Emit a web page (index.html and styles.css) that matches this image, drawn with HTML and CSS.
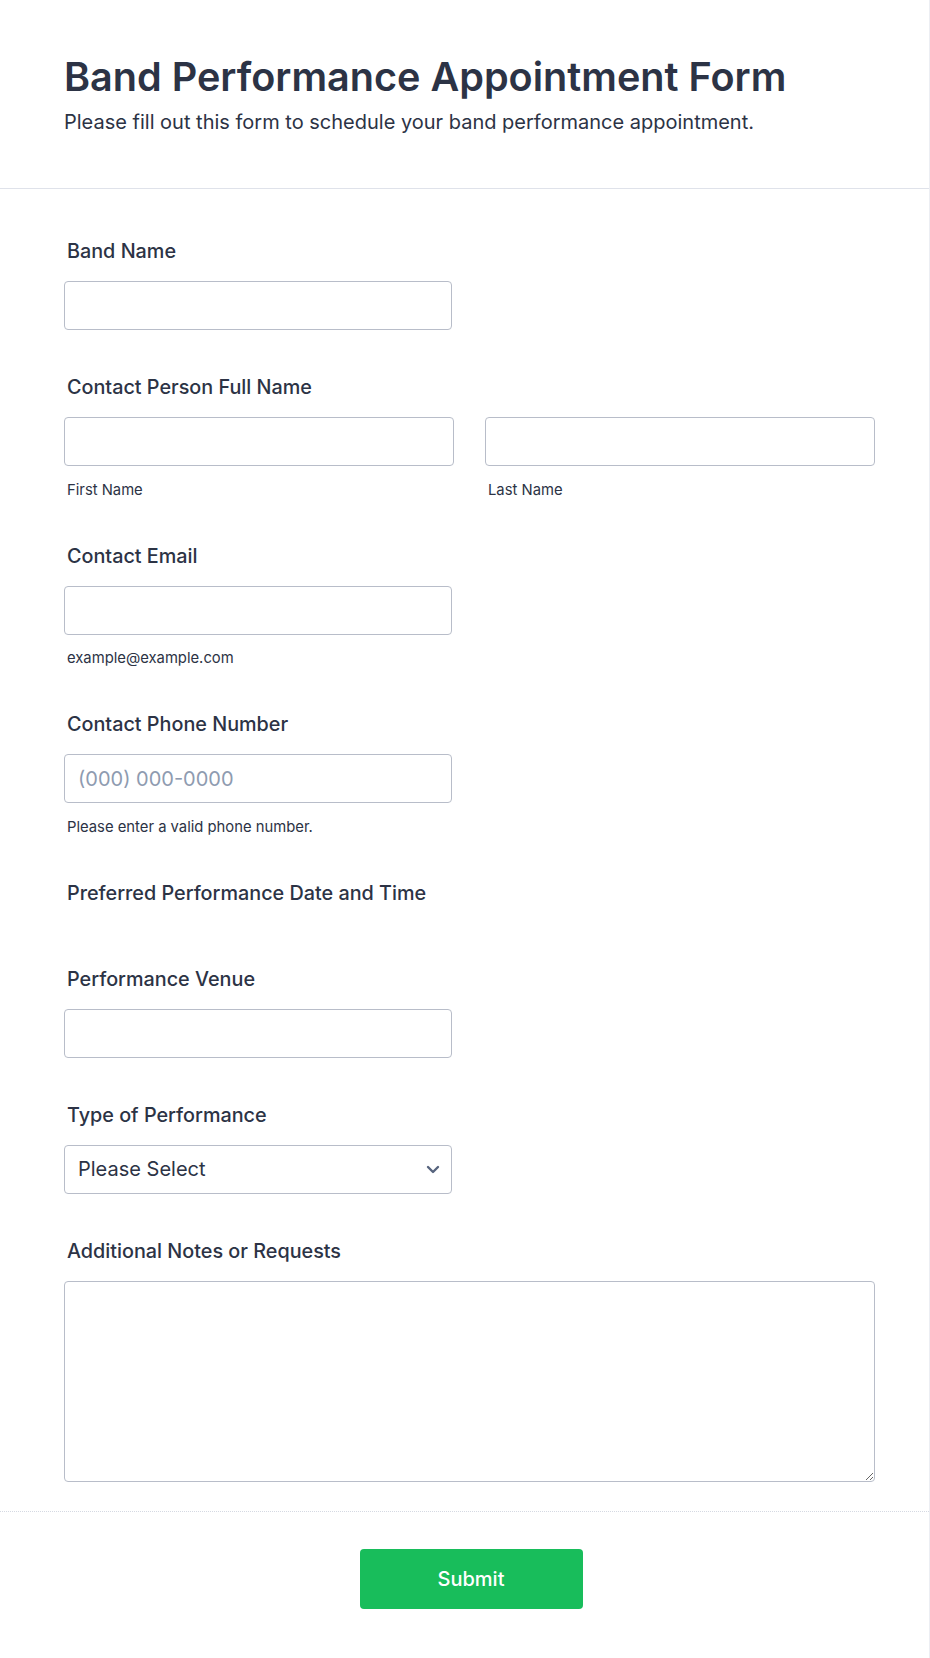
FILE: index.html
```html
<!DOCTYPE html>
<html lang="en">
<head>
<meta charset="utf-8">
<title>Band Performance Appointment Form</title>
<link rel="stylesheet" href="styles.css">
</head>
<body>
<div class="page">
  <header class="form-header">
    <h1 class="title">Band Performance Appointment Form</h1>
    <p class="subtitle">Please fill out this form to schedule your band performance appointment.</p>
  </header>

  <form class="form-body">
    <div class="field">
      <label class="label">Band Name</label>
      <input class="input short" type="text">
    </div>

    <div class="field">
      <label class="label">Contact Person Full Name</label>
      <div class="two-col">
        <div class="col">
          <input class="input" type="text">
          <span class="sublabel">First Name</span>
        </div>
        <div class="col">
          <input class="input" type="text">
          <span class="sublabel">Last Name</span>
        </div>
      </div>
    </div>

    <div class="field">
      <label class="label">Contact Email</label>
      <input class="input short" type="email">
      <span class="sublabel">example@example.com</span>
    </div>

    <div class="field">
      <label class="label">Contact Phone Number</label>
      <input class="input short" type="tel" placeholder="(000) 000-0000">
      <span class="sublabel">Please enter a valid phone number.</span>
    </div>

    <div class="field">
      <label class="label">Preferred Performance Date and Time</label>
      <div class="spacer"></div>
    </div>

    <div class="field">
      <label class="label">Performance Venue</label>
      <input class="input short" type="text">
    </div>

    <div class="field">
      <label class="label">Type of Performance</label>
      <div class="select-wrap short">
        <select class="select">
          <option>Please Select</option>
        </select>
        <svg class="chevron" width="14" height="9" viewBox="0 0 14 9" aria-hidden="true">
          <path d="M2 2 L7 7 L12 2" fill="none" stroke="#57647e" stroke-width="2.4" stroke-linecap="round" stroke-linejoin="round"/>
        </svg>
      </div>
    </div>

    <div class="field last">
      <label class="label">Additional Notes or Requests</label>
      <textarea class="textarea"></textarea>
    </div>
  </form>

  <div class="footer">
    <button class="submit" type="button">Submit</button>
  </div>
</div>
</body>
</html>
```

FILE: styles.css
```css
* {
  box-sizing: border-box;
}

html, body {
  margin: 0;
  padding: 0;
  background: #ffffff;
}

body {
  font-family: "Inter", "Liberation Sans", sans-serif;
  color: #2c3345;
}

.page {
  width: 930px;
  min-height: 1658px;
  border-right: 1px solid #eceef3;
}

.form-header {
  padding: 53px 64px 53px 64px;
  border-bottom: 1px solid #dfe2ea;
}

.title {
  margin: 0;
  font-size: 39.6px;
  line-height: 48px;
  font-weight: 600;
  color: #2c3345;
}

.subtitle {
  margin: 9px 0 0 0;
  font-size: 20px;
  line-height: 25px;
  font-weight: 400;
  color: #2c3345;
  padding-left: 0;
}

.form-body {
  padding: 50px 54px 29px 64px;
  display: flex;
  flex-direction: column;
  gap: 45px;
}

.field {
  display: flex;
  flex-direction: column;
  align-items: flex-start;
}

.label {
  font-size: 19.8px;
  line-height: 24px;
  font-weight: 500;
  color: #2c3345;
  padding-left: 3px;
  margin-bottom: 18px;
}

.field .spacer {
  height: 0;
  margin-top: -1px;
}

.input {
  display: block;
  width: 100%;
  height: 49px;
  border: 1px solid #b8bdc9;
  border-radius: 4px;
  background: #fff;
  padding: 0 13px;
  font-family: "Inter", "Liberation Sans", sans-serif;
  font-size: 20px;
  color: #2c3345;
  outline: none;
}

.input::placeholder {
  color: #8e9bb0;
}

.short {
  width: 388px;
}

.two-col {
  display: grid;
  grid-template-columns: 1fr 1fr;
  column-gap: 31px;
  width: 811px;
}

.col {
  display: flex;
  flex-direction: column;
}

.sublabel {
  display: block;
  margin-top: 14.5px;
  font-size: 14.8px;
  line-height: 18px;
  color: #2c3345;
  padding-left: 3px;
}

.select-wrap {
  position: relative;
}

.select {
  display: block;
  width: 100%;
  height: 49px;
  border: 1px solid #b8bdc9;
  border-radius: 4px;
  background: #fff;
  padding: 0 40px 0 13px;
  font-family: "Inter", "Liberation Sans", sans-serif;
  font-size: 20px;
  color: #2c3345;
  appearance: none;
  -webkit-appearance: none;
  outline: none;
}

.chevron {
  position: absolute;
  right: 12px;
  top: 20px;
}

.textarea {
  display: block;
  width: 811px;
  height: 201px;
  border: 1px solid #b8bdc9;
  border-radius: 4px;
  background: #fff;
  padding: 10px 13px;
  font-family: "Inter", "Liberation Sans", sans-serif;
  font-size: 20px;
  color: #2c3345;
  outline: none;
  resize: vertical;
}

.footer {
  border-top: 1px dotted #d5d9e2;
  padding: 37.5px 0 47px 0;
  display: flex;
  justify-content: center;
}

.submit {
  width: 223px;
  height: 60px;
  margin-left: 13px;
  border: none;
  border-radius: 4px;
  background: #18bd5b;
  color: #ffffff;
  font-family: "Inter", "Liberation Sans", sans-serif;
  font-size: 20px;
  font-weight: 500;
  cursor: pointer;
}
```
